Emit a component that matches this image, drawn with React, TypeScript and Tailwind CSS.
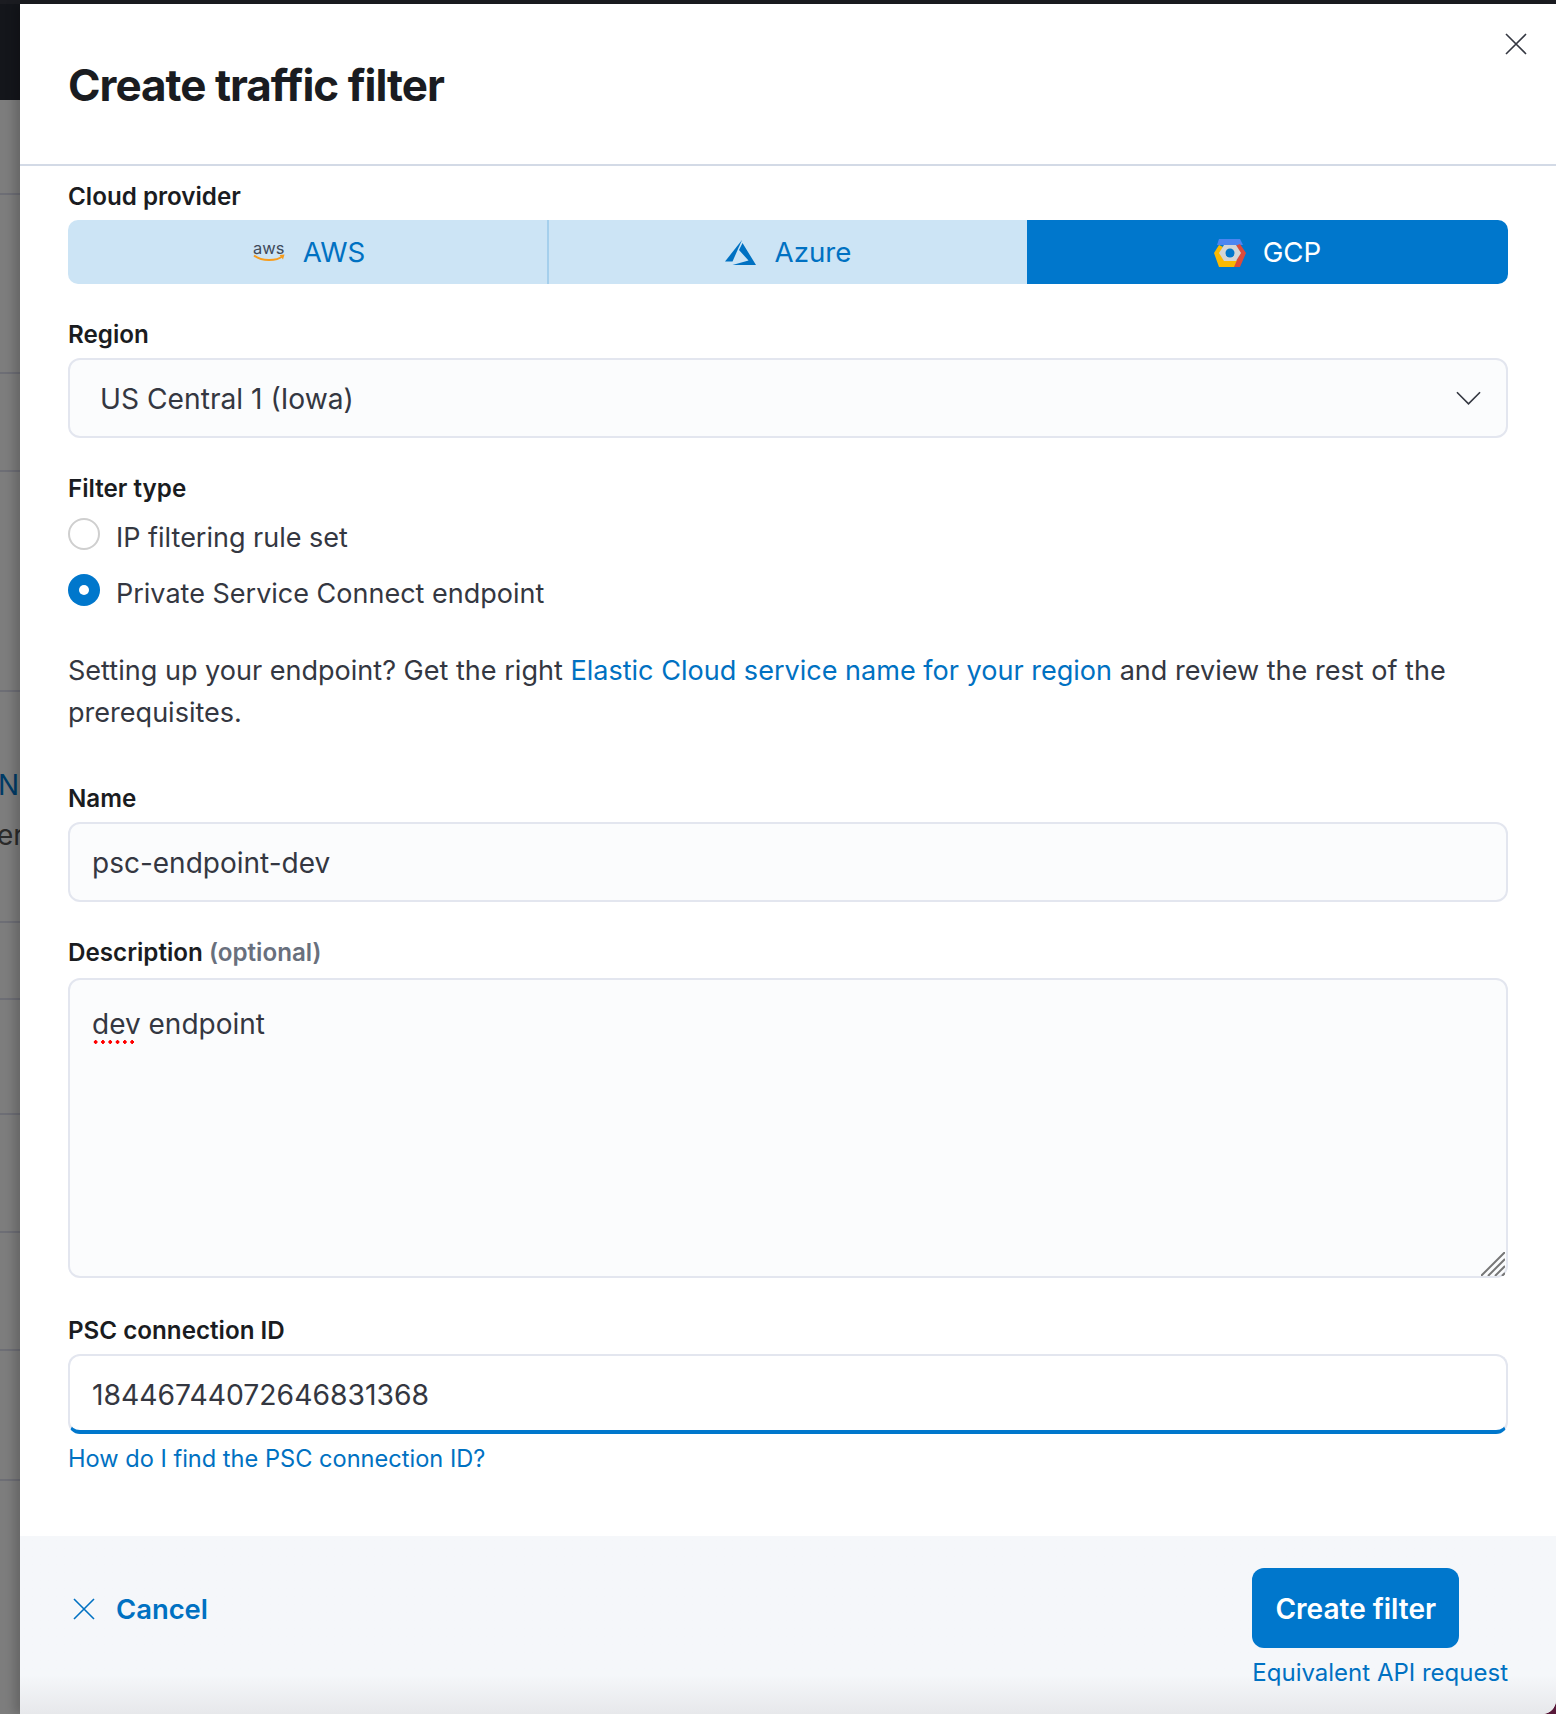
const font = { fontFamily: "Inter, 'Noto Sans', sans-serif" };

// leftover rows of the page behind the flyout, clipped to the 20px strip
const rowHeights = [95, 179, 98, 220, 231, 77, 115, 118, 118, 130, 235];

function AwsLogo() {
  return (
    <svg width="32" height="22" viewBox="0 0 32 22" fill="none">
      <text x="0" y="11.5" fontFamily="Inter, sans-serif" fontSize="16.5" fill="#3f4a5a">
        aws
      </text>
      <path d="M1 13.5C9 19.5 23 19.5 30 14" stroke="#f79c1c" strokeWidth="2" />
      <path d="M26.5 13L31.5 12.5L30 17.5" fill="#f79c1c" />
    </svg>
  );
}

function AzureLogo() {
  return (
    <svg width="32" height="26" viewBox="0 0 32 26" fill="#0071c2">
      <path d="M17 0L0 21.5H7.5L17 0Z" />
      <path d="M17.5 3L31 25H7.5L23.5 20.5L14 10L17.5 3Z" />
    </svg>
  );
}

function GcpLogo() {
  return (
    <svg width="32" height="28" viewBox="0 0 32 28" fill="none">
      <path d="M5 0H26L29 6H3L5 0Z" fill="#4c85f2" />
      <path d="M26 5L32 14L26 28H19L26 14L21 7Z" fill="#dd4b39" />
      <path d="M5 6L0 14L5 28H20L23 21H11L6 14L9 8Z" fill="#fbb900" />
      <path d="M10 6H22L27 14L22 22H10L5 14Z" fill="#d5d5d5" />
      <circle cx="16" cy="14" r="4.5" fill="#0077cc" />
    </svg>
  );
}

function CrossIcon() {
  return (
    <svg width="22" height="22" viewBox="0 0 22 22" fill="none" stroke="currentColor" strokeWidth="1.6">
      <path d="M1 1L21 21M21 1L1 21" />
    </svg>
  );
}

function FieldLabel({ children, className = "" }: { children: React.ReactNode; className?: string }) {
  return <div className={`h-[34px] text-[24.2px] leading-[34px] font-semibold text-[#1a1c21] ${className}`}>{children}</div>;
}

export default function App() {
  return (
    <div className="w-[1556px] h-[1714px] overflow-hidden flex flex-col bg-[#5a1a3a]" style={font}>
      <div className="h-1 shrink-0 bg-[#1b1c21]" />
      <div className="flex flex-1 min-h-0">
        {/* page behind the flyout */}
        <div className="w-5 shrink-0 bg-[#7d7d7d] flex flex-col overflow-hidden">
          <div className="h-24 shrink-0 bg-[#14161b]" />
          {rowHeights.map((h, i) => (
            <div
              key={i}
              className="shrink-0 border-b-2 border-[#6d6e75] overflow-hidden whitespace-nowrap text-[28px]"
              style={{ height: h }}
            >
              {i === 4 && (
                <div className="pt-[75px] -ml-[2px]">
                  <div className="leading-[36px] text-[#003b66]">Ne</div>
                  <div className="mt-[14px] leading-[36px] text-[#2a2a2a] -ml-[1px]">er</div>
                </div>
              )}
            </div>
          ))}
        </div>

        {/* flyout */}
        <div className="relative flex-1 flex flex-col bg-white rounded-br-[14px] shadow-[-6px_0_10px_rgba(0,0,0,0.18)]">
          <button className="absolute right-[29px] top-[29px] text-[#343741]">
            <CrossIcon />
          </button>

          <div className="h-[162px] shrink-0 border-b-2 border-[#d3dae6] pl-12 pt-[51px]">
            <h1 className="text-[44px] leading-[60px] font-bold tracking-[-1px] text-[#1a1c21]">Create traffic filter</h1>
          </div>

          <div className="px-12 pt-[14px]">
            <FieldLabel className="mb-[6px]">Cloud provider</FieldLabel>
            <div className="grid grid-cols-[479px_480px_481px] h-16 rounded-[10px] overflow-hidden text-[27.7px]">
              <div className="flex items-center justify-center gap-[18px] pt-[2px] pl-[3px] bg-[#cce4f5] text-[#0071c2]">
                <AwsLogo />
                <span>AWS</span>
              </div>
              <div className="flex items-center justify-center gap-[18px] pt-[2px] bg-[#cce4f5] text-[#0071c2] border-l-2 border-[#a5cfec]">
                <AzureLogo />
                <span>Azure</span>
              </div>
              <div className="flex items-center justify-center gap-[17px] pt-[2px] bg-[#0077cc] text-white">
                <GcpLogo />
                <span>GCP</span>
              </div>
            </div>

            <FieldLabel className="mt-[34px] mb-[6px]">Region</FieldLabel>
            <div className="h-20 rounded-xl border-2 border-[#e3e6ef] bg-[#fbfcfd] pl-[30px] pr-[25px] flex items-center justify-between text-[28.2px] text-[#343741]">
              <span className="pt-[2px]">US Central 1 (Iowa)</span>
              <svg width="25" height="14" viewBox="0 0 26 14" fill="none" stroke="#343741" strokeWidth="1.7">
                <path d="M1 1L13 13L25 1" />
              </svg>
            </div>

            <FieldLabel className="mt-[34px] mb-3">Filter type</FieldLabel>
            <div className="flex flex-col gap-[17px] text-[27px] leading-[38px] text-[#343741]">
              <div className="flex gap-4">
                <div className="w-8 h-8 rounded-full border-2 border-[#cfcfcf] bg-white" />
                <span className="pt-[1px]">IP filtering rule set</span>
              </div>
              <div className="flex gap-4">
                <div className="w-8 h-8 rounded-full bg-[#0077cc] flex items-center justify-center">
                  <div className="w-[10px] h-[10px] rounded-full bg-white" />
                </div>
                <span className="pt-[1px]">Private Service Connect endpoint</span>
              </div>
            </div>

            <p className="mt-[37px] text-[27.05px] leading-[42px] text-[#343741]">
              Setting up your endpoint? Get the right <a className="text-[#0071c2]">Elastic Cloud service name for your region</a> and review the rest of the prerequisites.
            </p>

            <FieldLabel className="mt-[48px] mb-[6px]">Name</FieldLabel>
            <div className="h-20 rounded-xl border-2 border-[#e3e6ef] bg-[#fbfcfd] px-[22px] pt-[2px] flex items-center text-[28px] text-[#343741]">
              psc-endpoint-dev
            </div>

            <FieldLabel className="mt-[34px] mb-2">
              Description <span className="text-[#69707d]">(optional)</span>
            </FieldLabel>
            <div className="relative h-[300px] rounded-xl border-2 border-[#e3e6ef] bg-[#fbfcfd] px-[22px] pt-[25px] text-[28px] leading-[38px] text-[#343741]">
              <span className="relative">
                dev
                <span className="absolute left-0 -bottom-[3px] w-[44px] h-1 bg-[radial-gradient(circle,#ff0000_1.7px,transparent_2px)] bg-[length:7.3px_4px] bg-repeat-x" />
              </span>{" "}
              endpoint
              <svg className="absolute right-[1px] bottom-0" width="24" height="24" viewBox="0 0 24 24" stroke="#777" strokeWidth="2">
                <path d="M24 0L0 24M24 7L7 24M24 14L14 24M24 21L21 24" />
              </svg>
            </div>

            <FieldLabel className="mt-[36px] mb-[6px]">PSC connection ID</FieldLabel>
            <div className="h-20 rounded-xl border-2 border-[#e3e6ef] border-b-4 border-b-[#0077cc] bg-white px-[22px] pt-[4px] flex items-center text-[28.3px] text-[#343741]">
              18446744072646831368
            </div>
            <a className="block mt-[7px] text-[23.6px] leading-[36px] text-[#0071c2]">How do I find the PSC connection ID?</a>
          </div>

          <div className="mt-auto h-[178px] rounded-br-[14px] bg-gradient-to-b from-[#f5f7fa] from-[78%] to-[#e7e8eb] pl-12 pr-12 pt-8 flex justify-between items-start">
            <div className="h-20 flex items-center gap-[21px] pl-[5px] pt-[2px] text-[#0071c2]">
              <CrossIcon />
              <span className="text-[27.4px] font-semibold pt-[2px]">Cancel</span>
            </div>
            <div className="flex flex-col items-start">
              <button className="w-[207px] h-20 rounded-xl bg-[#0077cc] text-white text-[28px] font-semibold pt-[2px]">Create filter</button>
              <a className="mt-2 text-[24px] leading-[34px] text-[#0071c2]">Equivalent API request</a>
            </div>
          </div>
        </div>
      </div>
    </div>
  );
}
